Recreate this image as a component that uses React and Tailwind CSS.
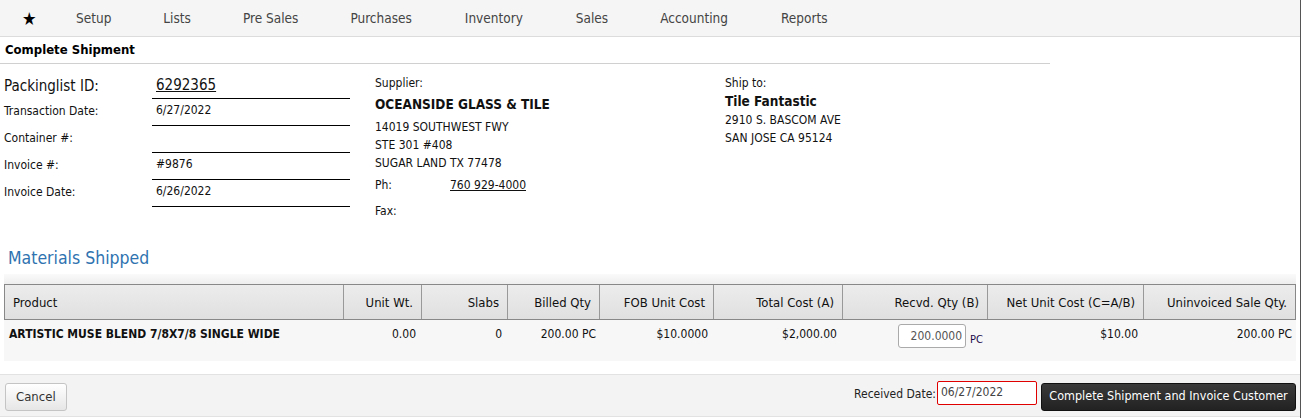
import { useState } from "react";

const columns = [
  { label: "Product", w: "w-[339px]", left: true },
  { label: "Unit Wt.", w: "w-[78px]" },
  { label: "Slabs", w: "w-[86px]" },
  { label: "Billed Qty", w: "w-[92px]" },
  { label: "FOB Unit Cost", w: "w-[114px]" },
  { label: "Total Cost (A)", w: "w-[129px]" },
  { label: "Recvd. Qty (B)", w: "w-[145px]" },
  { label: "Net Unit Cost (C=A/B)", w: "w-[156px]" },
  { label: "Uninvoiced Sale Qty.", w: "flex-1" },
];

const FormRow = ({ label, value }) => (
  <div className="flex items-end h-[27px]">
    <div className="w-[148px] pb-[6px] text-[12px]">{label}</div>
    <div className="w-[198px] h-full flex items-end pb-[6px] pl-[4px] border-b border-black text-[12px]">{value}</div>
  </div>
);

const App = () => {
  const [recvd, setRecvd] = useState("200.0000");
  const [receivedDate, setReceivedDate] = useState("06/27/2022");

  return (
    <div
      className="min-h-[418px] bg-white text-[#111] border-r border-[#555]"
      style={{ fontFamily: '"DejaVu Sans Condensed", "DejaVu Sans", sans-serif' }}
    >
      {/* Top nav */}
      <div className="h-[37px] bg-[#f5f5f5] border-b border-[#dcdcdc] flex items-center">
        <span className="w-[60px] pl-[22px] text-[18px] text-black">★</span>
        <div className="flex text-[13.5px] text-[#444]">
          <span className="ml-[16px]">Setup</span>
          <span className="ml-[52px]">Lists</span>
          <span className="ml-[52px]">Pre Sales</span>
          <span className="ml-[52px]">Purchases</span>
          <span className="ml-[53px]">Inventory</span>
          <span className="ml-[53px]">Sales</span>
          <span className="ml-[52px]">Accounting</span>
          <span className="ml-[53px]">Reports</span>
        </div>
      </div>

      {/* Title */}
      <div className="w-[1050px] h-[27px] border-b border-[#d0d0d0] flex items-center pl-[5px]">
        <h1 className="text-[13px] font-bold text-black">Complete Shipment</h1>
      </div>

      {/* Header info */}
      <div className="flex pt-[10px] pl-[4px]">
        <div className="w-[371px]">
          <div className="flex items-end h-[25px]">
            <div className="w-[148px] pb-[2px] text-[15px]">Packinglist ID:</div>
            <div className="w-[198px] h-full flex items-end pb-[2px] pl-[4px] border-b border-black text-[15px]">
              <span className="underline">6292365</span>
            </div>
          </div>
          <FormRow label="Transaction Date:" value="6/27/2022" />
          <FormRow label="Container #:" value="" />
          <FormRow label="Invoice #:" value="#9876" />
          <FormRow label="Invoice Date:" value="6/26/2022" />
        </div>

        <div className="w-[350px] text-[12px]">
          <div className="leading-[18px]">Supplier:</div>
          <div className="text-[13.5px] font-bold mt-[3px] leading-[18px]">OCEANSIDE GLASS &amp; TILE</div>
          <div className="mt-[5px] leading-[18px]">14019 SOUTHWEST FWY</div>
          <div className="leading-[18px]">STE 301 #408</div>
          <div className="leading-[18px]">SUGAR LAND TX 77478</div>
          <div className="flex mt-[4px] leading-[18px]">
            <span className="w-[75px]">Ph:</span>
            <span className="underline">760 929-4000</span>
          </div>
          <div className="mt-[8px] leading-[18px]">Fax:</div>
        </div>

        <div className="text-[12px]">
          <div className="leading-[18px]">Ship to:</div>
          <div className="text-[13.5px] font-bold leading-[18px]">Tile Fantastic</div>
          <div className="mt-[1px] leading-[18px]">2910 S. BASCOM AVE</div>
          <div className="leading-[18px]">SAN JOSE CA 95124</div>
        </div>
      </div>

      {/* Materials */}
      <h2 className="mt-[25px] pl-[8px] text-[17.5px] text-[#2f73b0]">Materials Shipped</h2>

      <div className="mt-[3px] mx-[4px] h-[10px] bg-gradient-to-b from-[#fafafa] to-[#eeeeee]" />
      <div className="mx-[4px] border border-[#888]">
        <div className="flex h-[34px] bg-gradient-to-b from-[#ececec] to-[#e0e0e0] text-[13px] text-[#111]">
          {columns.map((c, i) => (
            <div
              key={c.label}
              className={`${c.w} flex items-center ${c.left ? "justify-start pl-[8px]" : "justify-end pr-[8px]"} ${i < columns.length - 1 ? "border-r border-[#999]" : ""}`}
            >
              {c.label}
            </div>
          ))}
        </div>
      </div>
      <div className="mx-[4px] flex h-[41px] bg-[#f7f7f7] text-[12px]">
        <div className="w-[339px] pl-[5px] pt-[5px] font-bold">ARTISTIC MUSE BLEND 7/8X7/8 SINGLE WIDE</div>
        <div className="w-[78px] text-right pr-[5px] pt-[5px]">0.00</div>
        <div className="w-[86px] text-right pr-[5px] pt-[5px]">0</div>
        <div className="w-[92px] text-right pr-[3px] pt-[5px]">200.00 PC</div>
        <div className="w-[114px] text-right pr-[5px] pt-[5px]">$10.0000</div>
        <div className="w-[129px] text-right pr-[5px] pt-[5px]">$2,000.00</div>
        <div className="w-[145px] flex justify-end items-start pt-[4px] pr-[4px]">
          <input
            value={recvd}
            onChange={(e) => setRecvd(e.target.value)}
            className="w-[68px] h-[24px] border border-[#aaa] rounded-[3px] bg-white text-right pr-[3px] text-[12px] text-[#555] outline-none"
          />
          <span className="ml-[4px] mt-[8px] text-[11px] text-[#1a0a4a]">PC</span>
        </div>
        <div className="w-[156px] text-right pr-[5px] pt-[5px]">$10.00</div>
        <div className="flex-1 text-right pr-[4px] pt-[5px]">200.00 PC</div>
      </div>

      {/* Footer */}
      <div className="mt-[13px] h-[43px] bg-[#f3f3f3] border-t border-b border-[#e2e2e2] flex items-center justify-between pl-[5px] pr-[4px]">
        <button className="h-[28px] px-[10px] mt-[2px] text-[13px] text-[#333] bg-gradient-to-b from-white to-[#e6e6e6] border border-[#c4c4c4] rounded-[3px]">
          Cancel
        </button>
        <div className="flex items-center">
          <span className="text-[12px] text-[#222] mr-[1px] mt-[-4px]">Received Date:</span>
          <input
            value={receivedDate}
            onChange={(e) => setReceivedDate(e.target.value)}
            className="w-[100px] h-[24px] mt-[-6px] border border-[#e00000] rounded-[2px] bg-white px-[3px] pb-[2px] text-[12px] text-[#444] outline-none"
          />
          <button className="ml-[4px] h-[28px] w-[255px] mt-[2px] text-[12.5px] text-white bg-gradient-to-b from-[#3a3a3a] to-[#222] border border-[#111] rounded-[3px]">
            Complete Shipment and Invoice Customer
          </button>
        </div>
      </div>
    </div>
  );
};

export default App;
